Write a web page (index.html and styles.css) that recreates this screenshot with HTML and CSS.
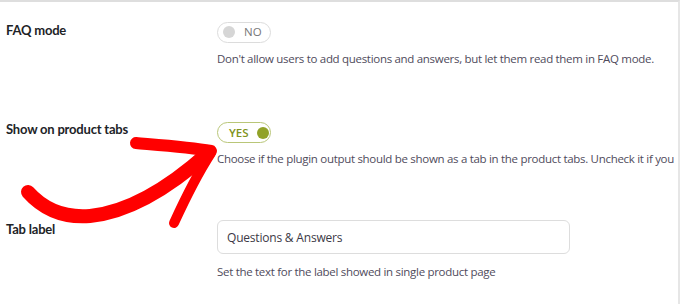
FILE: index.html
```html
<!DOCTYPE html>
<html lang="en">
<head>
<meta charset="utf-8">
<title>Settings</title>
<link rel="stylesheet" href="styles.css">
</head>
<body>
<div class="panel">
  <div class="row row-faq">
    <div class="label">FAQ mode</div>
    <div class="field">
      <span class="toggle off"><span class="knob"></span><span class="state">NO</span></span>
      <p class="desc">Don't allow users to add questions and answers, but let them read them in FAQ mode.</p>
    </div>
  </div>
  <div class="row row-tabs">
    <div class="label">Show on product tabs</div>
    <div class="field">
      <span class="toggle on"><span class="state">YES</span><span class="knob"></span></span>
      <p class="desc nowrap">Choose if the plugin output should be shown as a tab in the product tabs. Uncheck it if you</p>
    </div>
  </div>
  <div class="row row-label">
    <div class="label">Tab label</div>
    <div class="field">
      <div class="input">Questions &amp; Answers</div>
      <p class="desc">Set the text for the label showed in single product page</p>
    </div>
  </div>
  <svg class="arrow" width="240" height="120" viewBox="0 0 240 120" aria-hidden="true">
    <g fill="none" stroke="#ff0000" stroke-linecap="round" stroke-linejoin="round">
      <path d="M28 67 C 45 86, 65 93, 90 91 C 130 87, 170 62, 208 28" stroke-width="14"/>
      <path d="M136 18 C 160 20, 190 22, 211 26" stroke-width="12"/>
      <path d="M211 28 C 200 45, 185 74, 174 98" stroke-width="10"/>
    </g>
  </svg>
</div>
</body>
</html>
```
FILE: styles.css
```css
html, body {
  margin: 0;
  padding: 0;
  background: #ffffff;
}
body {
  font-family: "Open Sans", "Noto Sans", sans-serif;
  color: #1d2327;
}
.panel {
  position: relative;
  width: 678px;
  height: 302px;
  border-top: 2px solid #dedede;
  border-right: 2px solid #e6e6e6;
  overflow: hidden;
}
.row {
  display: grid;
  grid-template-columns: 211px 1fr;
  padding-left: 6px;
}
.row-faq { padding-top: 19px; height: 80px; }
.row-tabs { padding-top: 19px; height: 81px; }
.row-label { padding-top: 19px; }
.label {
  font-family: "Lato", "Open Sans", sans-serif;
  font-size: 13px;
  letter-spacing: -0.2px;
  font-weight: 700;
  color: #1d2327;
  line-height: 18px;
}
.field { min-width: 0; }
.toggle {
  box-sizing: border-box;
  display: inline-flex;
  align-items: center;
  height: 21px;
  width: 54px;
  border-radius: 11px;
  border: 1px solid #dcdcdc;
  padding: 0 6px 0 5px;
  gap: 9px;
  font-size: 11.5px;
  line-height: 1;
}
.toggle .knob {
  width: 12px;
  height: 12px;
  border-radius: 50%;
  background: #d6d6d6;
  flex: none;
}
.toggle.off .state { color: #777; }
.toggle.on {
  border-color: #b9c678;
  padding: 0 5px 0 11px;
  gap: 8px;
}
.toggle.on .state { color: #7f9321; font-weight: 600; }
.toggle.on .knob { background: #91a227; }
.desc {
  margin: 8px 0 0;
  font-size: 11.5px;
  letter-spacing: -0.3px;
  line-height: 16px;
  color: #4f4b5c;
}
.nowrap { white-space: nowrap; }
.input {
  box-sizing: border-box;
  width: 353px;
  height: 34px;
  border: 1px solid #dddddd;
  border-radius: 6px;
  padding: 0 9px;
  display: flex;
  align-items: center;
  font-size: 12px;
  letter-spacing: -0.2px;
  color: #3c3946;
}
.row-label .desc { margin-top: 10px; }
.arrow {
  position: absolute;
  left: 0;
  top: 123px;
}
```
